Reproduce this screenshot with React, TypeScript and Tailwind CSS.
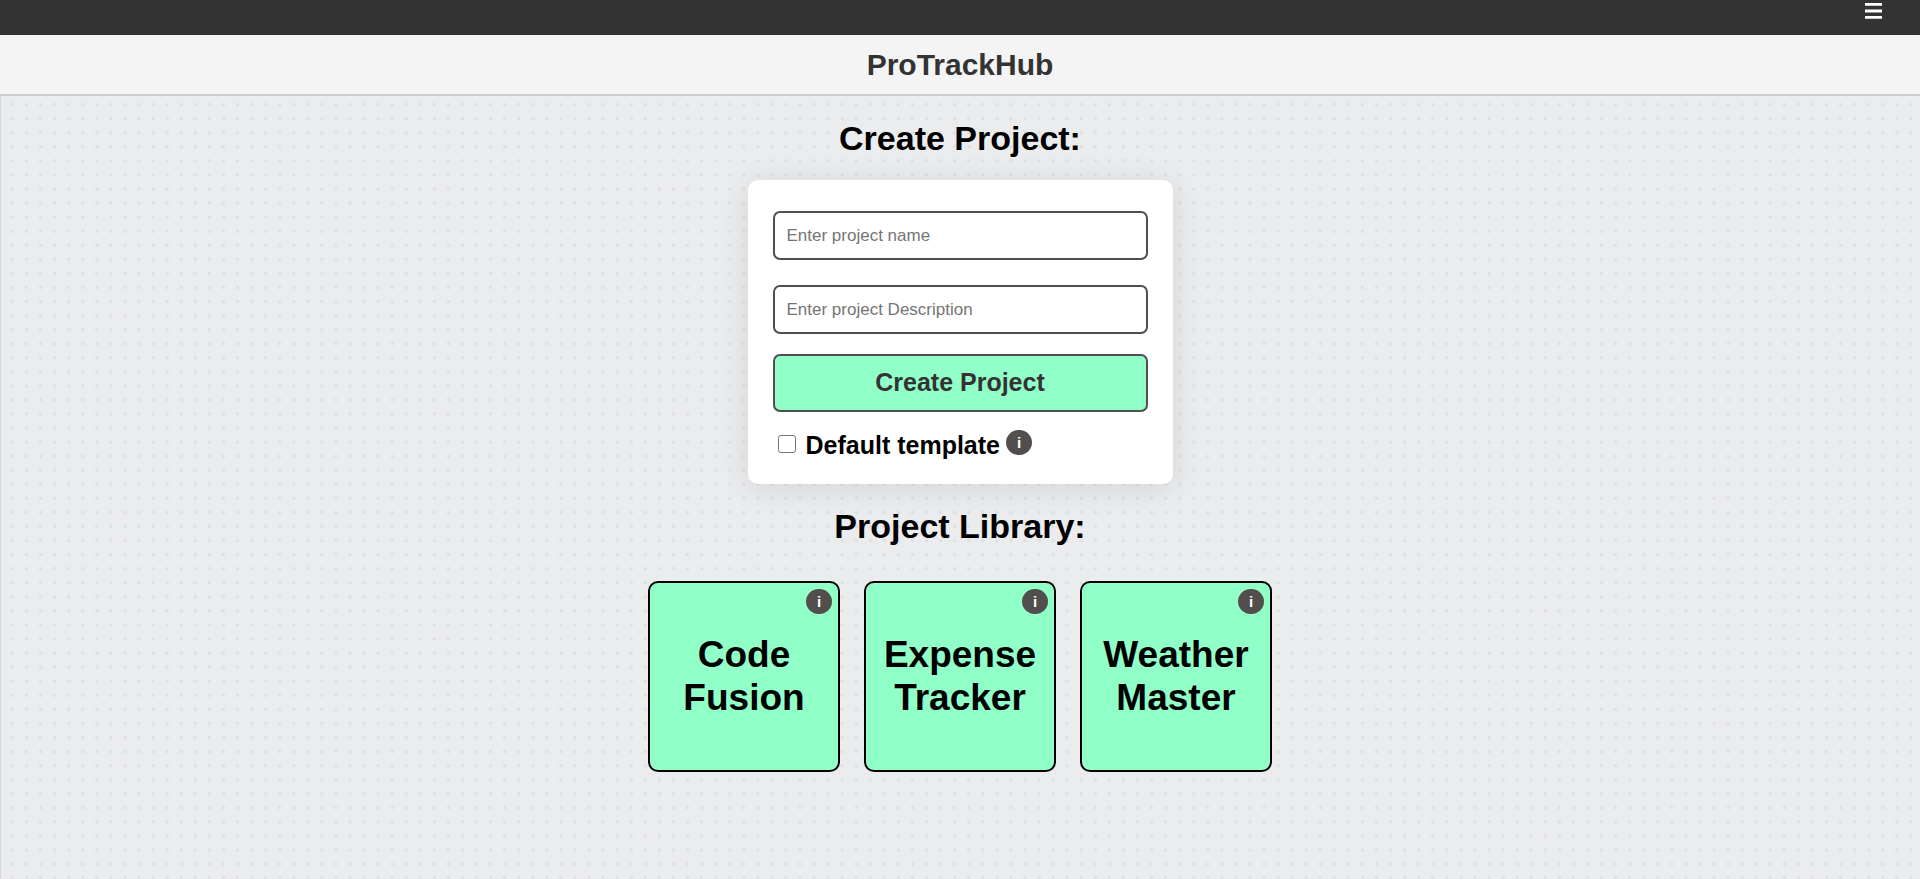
import React from "react";

const DOT_PITCH = 14.0625;

const projects = ["Code Fusion", "Expense Tracker", "Weather Master"];

function DottedBackdrop() {
  return (
    <svg aria-hidden="true" className="absolute inset-0 -z-10 h-full w-full">
      <defs>
        <pattern id="dots" x="5.5" y="1.6" width={DOT_PITCH} height={DOT_PITCH} patternUnits="userSpaceOnUse">
          <circle cx="7" cy="7" r="1.8" fill="#dfe0e2" />
        </pattern>
      </defs>
      <rect width="100%" height="100%" fill="url(#dots)" />
      <rect width="1" height="100%" fill="#d6d7d9" />
    </svg>
  );
}

function InfoBadge({ label }: { label: string }) {
  return (
    <button
      type="button"
      aria-label={label}
      className="flex h-[25px] w-[26px] shrink-0 items-center justify-center rounded-full bg-[#534e4e] text-[15px] leading-none font-bold text-white"
    >
      i
    </button>
  );
}

function TextField({ id, placeholder }: { id: string; placeholder: string }) {
  return (
    <input
      id={id}
      type="text"
      aria-label={placeholder}
      placeholder={placeholder}
      className="h-[49px] w-full rounded-[7px] border-2 border-[#534e4e] bg-white px-3 text-[17px] text-black placeholder:text-[#757575]"
    />
  );
}

function CreateProjectForm() {
  return (
    <form
      onSubmit={(e) => e.preventDefault()}
      className="flex w-full max-w-[425px] flex-col rounded-[10px] bg-white px-[25px] pt-[31px] pb-[21px] shadow-[0_4px_30px_rgba(0,0,0,0.1)]"
    >
      <div className="flex flex-col gap-[25px]">
        <TextField id="project-name" placeholder="Enter project name" />
        <TextField id="project-description" placeholder="Enter project Description" />
      </div>
      <button
        type="submit"
        className="mt-5 h-[58px] rounded-[7px] border-2 border-[#534e4e] bg-[#90ffc8] text-[25px] font-bold text-[#333]"
      >
        Create Project
      </button>
      <div className="mt-4 flex items-start pl-[5px]">
        <input
          id="default-template"
          type="checkbox"
          className="mt-[7px] size-[18px] appearance-none rounded-[3px] border border-[#767676] bg-white checked:bg-[#0075ff]"
        />
        <label htmlFor="default-template" className="ml-[10px] text-[25px] leading-[35px] font-bold">
          Default template
        </label>
        <div className="ml-[6px] pt-[2px]">
          <InfoBadge label="About the default template" />
        </div>
      </div>
    </form>
  );
}

function ProjectCard({ name }: { name: string }) {
  return (
    <li className="relative flex h-[191px] w-48 items-center justify-center rounded-[10px] border-2 border-black bg-[#90ffc8] pb-[2px]">
      <a href="#" className="px-3 text-center text-[37px] leading-[43px] font-bold">
        {name}
      </a>
      <div className="absolute top-[6px] right-[6px]">
        <InfoBadge label={`About ${name}`} />
      </div>
    </li>
  );
}

export default function App() {
  return (
    <div className="flex min-h-screen flex-col bg-[#ebecee] font-['Liberation_Sans',Arial,sans-serif] text-black">
      <nav className="flex h-[35px] justify-end bg-[#333] pr-[38px]">
        <button type="button" aria-label="Menu" className="flex h-[22px] items-center text-white">
          <svg width="17" height="16" viewBox="0 0 17 16" fill="currentColor" className="block" aria-hidden="true">
            <path d="M0 0h17v2.8H0zM0 6.4h17v3H0zM0 13h17v2.7H0z" />
          </svg>
        </button>
      </nav>
      <header className="border-b-2 border-[#ccc] bg-[#f4f4f4] py-3">
        <h1 className="text-center text-[30px] leading-[35px] font-bold text-[#333]">ProTrackHub</h1>
      </header>
      <main className="relative isolate flex grow flex-col items-center">
        <DottedBackdrop />
        <h2 className="mt-[22px] text-[34px] leading-10 font-bold">Create Project:</h2>
        <div className="mt-[22px] flex w-full justify-center">
          <CreateProjectForm />
        </div>
        <h2 className="mt-[22px] text-[34px] leading-10 font-bold">Project Library:</h2>
        <ul className="mt-[35px] flex flex-wrap justify-center gap-6">
          {projects.map((name) => (
            <ProjectCard key={name} name={name} />
          ))}
        </ul>
      </main>
    </div>
  );
}
